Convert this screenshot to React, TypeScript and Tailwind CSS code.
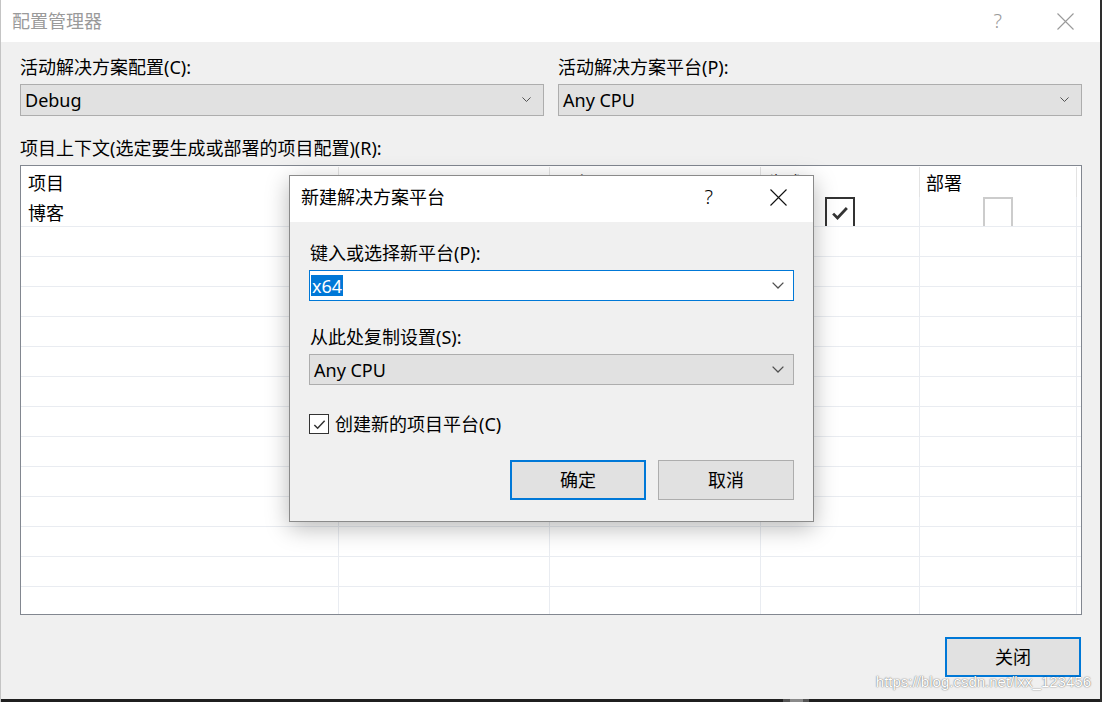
import React from 'react';

const FONT = "font-['Noto_Sans','Noto_Sans_CJK_SC',sans-serif]";

const Chevron: React.FC<{ w?: number }> = ({ w = 10 }) => (
  <svg width={w} height={w * 0.6} viewBox="0 0 10 6" fill="none">
    <polyline points="0.5,0.5 5,5 9.5,0.5" stroke="#505050" strokeWidth="1.1" />
  </svg>
);

const CloseX: React.FC<{ color: string }> = ({ color }) => (
  <svg width="17" height="17" viewBox="0 0 17 17" fill="none">
    <path d="M0.5 0.5 L16.5 16.5 M16.5 0.5 L0.5 16.5" stroke={color} strokeWidth="1.1" />
  </svg>
);

const Check: React.FC<{ size: number; color: string; width?: number }> = ({ size, color, width = 2 }) => (
  <svg width={size} height={size} viewBox="0 0 16 16" fill="none">
    <polyline points="2.5,8.5 6,12 13.5,4" stroke={color} strokeWidth={width} />
  </svg>
);

const Dropdown: React.FC<{ value: string; chevron?: number }> = ({ value, chevron = 9 }) => (
  <div className="h-[32px] bg-[#e1e1e1] border border-[#adadad] flex items-center justify-between pl-[4px] pr-[12px]">
    <span className="text-[18px] leading-none">{value}</span>
    <Chevron w={chevron} />
  </div>
);

const gridCols = 'grid grid-cols-[318px_211px_211px_159px_157px_1fr]';

const ProjectTable: React.FC = () => {
  const headers = ['项目', '配置', '平台', '生成', '部署', ''];
  const emptyRows = Array.from({ length: 13 });
  return (
    <div className="h-[450px] border border-[#828790] bg-white overflow-hidden">
      <div className={`${gridCols} h-[31px]`}>
        {headers.map((h, i) => (
          <div
            key={i}
            className={`flex items-center ${i === 0 ? 'pl-[7px]' : 'pl-[6px]'} ${i < 5 ? 'border-r border-[#e3e3e3]' : ''} mt-[1px] pt-[2px]`}
          >
            <span className="text-[18px] leading-none">{h}</span>
          </div>
        ))}
      </div>
      <div className={`${gridCols} h-[30px] border-b border-[#e9ecf1] overflow-hidden`}>
        <div className="flex items-center pl-[7px]">
          <span className="text-[18px] leading-none">博客</span>
        </div>
        <div className="border-r border-[#e9ecf1]" />
        <div className="border-r border-[#e9ecf1]" />
        <div className="border-r border-[#e9ecf1] flex justify-center">
          <div className="w-[30px] h-[32px] shrink-0 border-2 border-[#333] flex items-start justify-center pt-[4px]">
            <Check size={20} color="#333" width={2.2} />
          </div>
        </div>
        <div className="border-r border-[#e9ecf1] flex justify-center">
          <div className="w-[30px] h-[32px] shrink-0 border-2 border-[#cccccc]" />
        </div>
        <div />
      </div>
      {emptyRows.map((_, r) => (
        <div key={r} className={`${gridCols} h-[30px] border-b border-[#e9ecf1]`}>
          <div className="border-r border-[#e9ecf1]" />
          <div className="border-r border-[#e9ecf1]" />
          <div className="border-r border-[#e9ecf1]" />
          <div className="border-r border-[#e9ecf1]" />
          <div className="border-r border-[#e9ecf1]" />
          <div />
        </div>
      ))}
    </div>
  );
};

const NewPlatformDialog: React.FC = () => (
  <div className="absolute left-[288px] top-[175px] w-[525px] h-[347px] border border-[#8a8a8a] bg-[#f0f0f0] shadow-[0_6px_22px_rgba(0,0,0,0.28)] flex flex-col">
    <div className="h-[46px] bg-white flex items-center pl-[11px] pb-[4px] shrink-0">
      <span className="text-[18px] leading-none">新建解决方案平台</span>
      <span className="ml-auto text-[20px] font-light leading-none mr-[57px]">?</span>
      <span className="mr-[26px] flex">
        <CloseX color="#111" />
      </span>
    </div>
    <div className="px-[19px] flex flex-col">
      <div className="mt-[19px] h-[24px] flex items-center pl-[1px]">
        <span className="text-[18px] leading-none">键入或选择新平台(P):</span>
      </div>
      <div className="mt-[5px] h-[31px] bg-white border border-[#0078d7] flex items-center justify-between pl-[1px] pr-[9px]">
        <span className="bg-[#0078d7] text-white text-[18px] h-[21px] flex items-center px-[1px] leading-none">x64</span>
        <Chevron w={12} />
      </div>
      <div className="mt-[24px] h-[24px] flex items-center pl-[1px]">
        <span className="text-[18px] leading-none">从此处复制设置(S):</span>
      </div>
      <div className="mt-[5px] h-[31px] bg-[#e1e1e1] border border-[#adadad] flex items-center justify-between pl-[4px] pr-[9px]">
        <span className="text-[18px] leading-none">Any CPU</span>
        <Chevron w={12} />
      </div>
      <div className="mt-[29px] h-[20px] flex items-center">
        <div className="w-[20px] h-[20px] border border-[#333] bg-white flex items-center justify-center">
          <Check size={15} color="#333" width={1.6} />
        </div>
        <span className="ml-[6px] text-[18px] leading-none">创建新的项目平台(C)</span>
      </div>
      <div className="mt-[26px] flex justify-end gap-[12px]">
        <button className="w-[136px] h-[40px] bg-[#e1e1e1] border-2 border-[#0078d7] text-[18px] leading-none">确定</button>
        <button className="w-[136px] h-[40px] bg-[#e1e1e1] border border-[#adadad] text-[18px] leading-none">取消</button>
      </div>
    </div>
  </div>
);

export default function App() {
  return (
    <div className={`relative w-[1102px] h-[702px] overflow-hidden bg-[#f0f0f0] border-l border-r-2 border-l-[#c4c4c4] border-r-[#2e2e2e] text-black ${FONT}`}>
      <div className="h-[42px] bg-white flex items-center pl-[11px]">
        <span className="text-[18px] leading-none text-[#9a9a9a]">配置管理器</span>
        <span className="ml-auto text-[20px] font-light leading-none text-[#9a9a9a] mr-[55px]">?</span>
        <span className="mr-[26px] flex">
          <CloseX color="#9a9a9a" />
        </span>
      </div>

      <div className="pl-[19px] pr-[18px] flex flex-col">
        <div className="grid grid-cols-2 gap-[14px]">
          <div className="flex flex-col">
            <div className="mt-[13px] h-[24px] flex items-center">
              <span className="text-[18px] leading-none">活动解决方案配置(C):</span>
            </div>
            <div className="mt-[5px]">
              <Dropdown value="Debug" />
            </div>
          </div>
          <div className="flex flex-col">
            <div className="mt-[13px] h-[24px] flex items-center">
              <span className="text-[18px] leading-none">活动解决方案平台(P):</span>
            </div>
            <div className="mt-[5px]">
              <Dropdown value="Any CPU" />
            </div>
          </div>
        </div>

        <div className="mt-[20px] h-[24px] flex items-center">
          <span className="text-[18px] leading-none">项目上下文(选定要生成或部署的项目配置)(R):</span>
        </div>
        <div className="mt-[5px]">
          <ProjectTable />
        </div>

        <div className="mt-[22px] flex justify-end pr-[1px]">
          <button className="w-[136px] h-[40px] bg-[#e1e1e1] border-2 border-[#0078d7] text-[18px] leading-none">关闭</button>
        </div>
      </div>

      <NewPlatformDialog />

      <div className="absolute right-[9px] top-[674px] text-[15px] leading-none font-['Liberation_Sans',sans-serif] text-white [text-shadow:0_0_1px_rgba(0,0,0,0.55),0_0_2px_rgba(0,0,0,0.3)]">
        https://blog.csdn.net/lxx_123456
      </div>

      <div className="absolute left-0 right-0 bottom-0 h-[3px] bg-[#1f1f1f] flex">
        <div className="ml-[782px] w-[26px] h-full bg-[#555] flex justify-center">
          <div className="w-[13px] h-full bg-[#8a8a8a]" />
        </div>
      </div>
    </div>
  );
}
